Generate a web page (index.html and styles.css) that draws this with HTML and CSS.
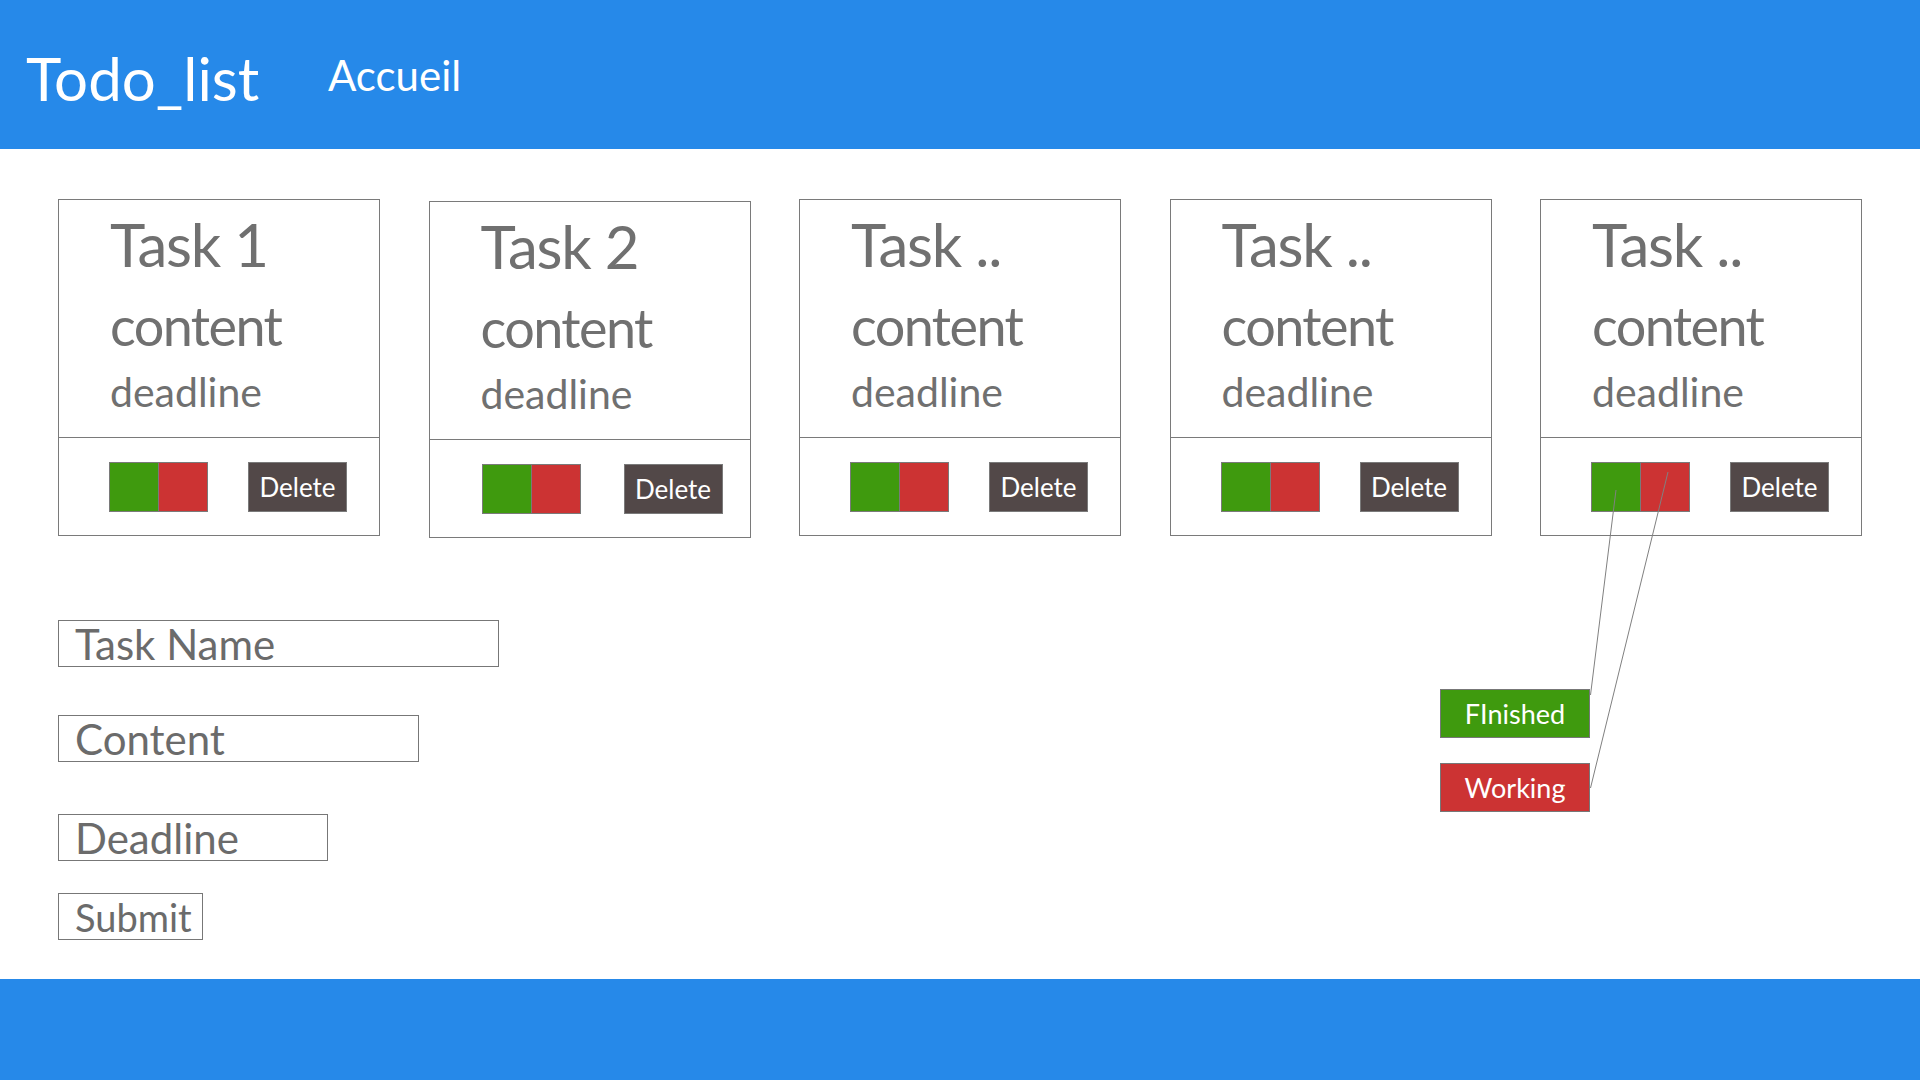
FILE: index.html
```html
<!DOCTYPE html>
<html lang="fr">
<head>
<meta charset="utf-8">
<title>Todo_list</title>
<link rel="stylesheet" href="styles.css">
</head>
<body>
<header class="topbar">
  <div class="brand">Todo_list</div>
  <nav class="nav"><a class="nav-link">Accueil</a></nav>
</header>
<main class="main">
  <section class="cards">
    <article class="card">
      <div class="card-body">
        <div class="card-title">Task 1</div>
        <div class="card-content">content</div>
        <div class="card-deadline">deadline</div>
      </div>
      <div class="card-actions">
        <div class="status"><span class="sq sq-green"></span><span class="sq sq-red"></span></div>
        <button class="btn-delete">Delete</button>
      </div>
    </article>
    <article class="card card-shift">
      <div class="card-body">
        <div class="card-title">Task 2</div>
        <div class="card-content">content</div>
        <div class="card-deadline">deadline</div>
      </div>
      <div class="card-actions">
        <div class="status"><span class="sq sq-green"></span><span class="sq sq-red"></span></div>
        <button class="btn-delete">Delete</button>
      </div>
    </article>
    <article class="card">
      <div class="card-body">
        <div class="card-title">Task ..</div>
        <div class="card-content">content</div>
        <div class="card-deadline">deadline</div>
      </div>
      <div class="card-actions">
        <div class="status"><span class="sq sq-green"></span><span class="sq sq-red"></span></div>
        <button class="btn-delete">Delete</button>
      </div>
    </article>
    <article class="card">
      <div class="card-body">
        <div class="card-title">Task ..</div>
        <div class="card-content">content</div>
        <div class="card-deadline">deadline</div>
      </div>
      <div class="card-actions">
        <div class="status"><span class="sq sq-green"></span><span class="sq sq-red"></span></div>
        <button class="btn-delete">Delete</button>
      </div>
    </article>
    <article class="card">
      <div class="card-body">
        <div class="card-title">Task ..</div>
        <div class="card-content">content</div>
        <div class="card-deadline">deadline</div>
      </div>
      <div class="card-actions">
        <div class="status"><span class="sq sq-green"></span><span class="sq sq-red"></span></div>
        <button class="btn-delete">Delete</button>
      </div>
    </article>
  </section>

  <form class="task-form">
    <div class="field field-name">Task Name</div>
    <div class="field field-content">Content</div>
    <div class="field field-deadline">Deadline</div>
    <div class="field field-submit">Submit</div>
  </form>

  <div class="legend">
    <div class="legend-item legend-finished">FInished</div>
    <div class="legend-item legend-working">Working</div>
  </div>

  <svg class="connectors" width="1920" height="830" viewBox="0 0 1920 830">
    <line x1="1616" y1="341" x2="1590.5" y2="546" />
    <line x1="1668" y1="323" x2="1590.5" y2="639" />
  </svg>
</main>
<footer class="bottombar"></footer>
</body>
</html>
```
FILE: styles.css
```css
* { box-sizing: border-box; }

html, body {
  margin: 0;
  padding: 0;
}

body {
  width: 1920px;
  height: 1080px;
  display: flex;
  flex-direction: column;
  background: #ffffff;
  font-family: Lato, "Open Sans", "DejaVu Sans", sans-serif;
  color: #707070;
  overflow: hidden;
}

/* ---------- header ---------- */
.topbar {
  height: 149px;
  flex: 0 0 149px;
  background: #2689e9;
  display: flex;
  align-items: flex-start;
  color: #ffffff;
}

.brand {
  margin-top: 47px;
  margin-left: 26px;
  width: 302px;
  font-size: 60px;
  line-height: 63px;
}

.nav {
  margin-top: 52px;
}

.nav-link {
  display: block;
  font-size: 42px;
  line-height: 46px;
  color: #ffffff;
  text-decoration: none;
}

/* ---------- main ---------- */
.main {
  position: relative;
  flex: 1 1 auto;
}

.cards {
  display: flex;
  justify-content: space-between;
  align-items: flex-start;
  padding: 0 58px;
  margin-top: 50px;
}

.card {
  width: 322px;
  border: 1px solid #7a7a7a;
  background: #fff;
}

.card-shift {
  margin-top: 2px;
}

.card-body {
  height: 238px;
  padding: 9px 0 0 51px;
  border-bottom: 1px solid #7a7a7a;
}

.card-title {
  font-size: 60px;
  line-height: 70px;
  letter-spacing: -1.2px;
  white-space: nowrap;
}

.card-content {
  margin-top: 7px;
  font-size: 54px;
  line-height: 80px;
  letter-spacing: -1.6px;
  white-space: nowrap;
}

.card-deadline {
  margin-top: 1px;
  font-size: 41px;
  line-height: 50px;
  white-space: nowrap;
}

.card-actions {
  height: 97px;
  display: flex;
  align-items: center;
  padding-left: 50px;
  gap: 40px;
}

.card-shift .card-actions {
  padding-left: 52px;
  gap: 43px;
}

.status {
  display: flex;
}

.sq {
  display: block;
  width: 50px;
  height: 50px;
  border: 1px solid #7a7a7a;
}

.sq + .sq {
  margin-left: -1px;
}

.sq-green { background: #3f9a0e; }
.sq-red { background: #cc3333; }

.btn-delete {
  width: 99px;
  height: 50px;
  padding: 0;
  margin: 0;
  background: #524848;
  border: 1px solid #7a7a7a;
  color: #ffffff;
  font-family: inherit;
  font-size: 26px;
  line-height: 48px;
}

/* ---------- form ---------- */
.task-form {
  margin-top: 82px;
  padding-left: 58px;
}

.field {
  height: 47px;
  border: 1px solid #777777;
  padding-left: 16px;
  font-size: 42px;
  line-height: 46px;
  color: #6b6b6b;
  white-space: nowrap;
}

.field-name { width: 441px; }
.field-content { width: 361px; margin-top: 48px; }
.field-deadline { width: 270px; margin-top: 52px; }
.field-submit {
  width: 145px;
  margin-top: 32px;
  font-size: 38px;
  line-height: 47px;
}

/* ---------- legend (annotation overlay) ---------- */
.legend {
  position: absolute;
  left: 1440px;
  top: 540px;
  display: flex;
  flex-direction: column;
  gap: 25px;
}

.legend-item {
  width: 150px;
  height: 49px;
  border: 1px solid #777777;
  color: #ffffff;
  font-size: 27px;
  line-height: 47px;
  text-align: center;
}

.legend-finished { background: #3f9a0e; }
.legend-working { background: #cc3333; }

.connectors {
  position: absolute;
  left: 0;
  top: 0;
  pointer-events: none;
}

.connectors line {
  stroke: #808080;
  stroke-width: 1;
}

/* ---------- footer ---------- */
.bottombar {
  flex: 0 0 101px;
  height: 101px;
  background: #2689e9;
}
```
